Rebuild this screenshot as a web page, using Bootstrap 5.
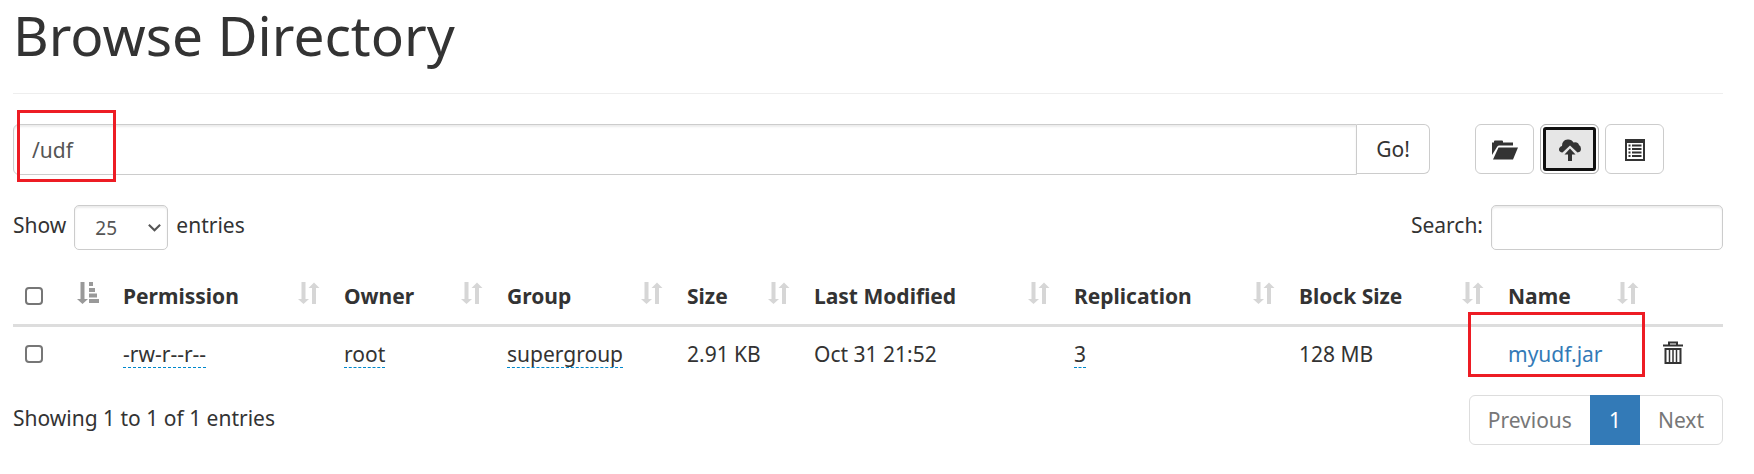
<!DOCTYPE html>
<html lang="en">
<head>
<meta charset="utf-8">
<meta name="viewport" content="width=device-width, initial-scale=1">
<title>Browse Directory</title>
<link href="https://cdn.jsdelivr.net/npm/bootstrap@5.3.0/dist/css/bootstrap.min.css" rel="stylesheet">
<style>
  body { font-family: "Noto Sans", "Open Sans", sans-serif; font-size: 21px; line-height: 30px; color: #333; background: #fff; }
  .page { padding: 4px 31px 29px 13px; }
  h1 { font-size: 55px; line-height: 62px; font-weight: 400; padding-bottom: 27px; border-bottom: 1px solid #eee; margin-bottom: 30px; }
  .form-control, .form-select { border-color: #ccc; color: #555; font-size: 21px; line-height: 30px; box-shadow: inset 0 2px 2px rgba(0,0,0,.075); }
  .path-bar { width: 1417px; flex: 0 1 auto; }
  .path-bar .form-control { height: 51px; padding: 9px 18px; border-radius: 6px 0 0 6px; }
  .tool-btn { height: 50px; border: 1px solid #ccc; border-radius: 6px; background: #fff; color: #333; font-size: 21px; line-height: 30px; padding: 0 18px; }
  .path-bar .tool-btn { width: 75px; border-radius: 0 6px 6px 0; }
  .tools { margin-left: 45px; gap: 6px; }
  .tools .tool-btn { width: 59px; padding: 0 0 2px; }
  .tools .tool-btn.picked { background: #e6e6e6; border-color: #adadad; outline: 3px solid #101010; outline-offset: -6px; box-shadow: inset 0 0 0 2px #fff; }
  .filters { margin-top: 30px; }
  .filters label, .filters span { padding-top: 5px; }
  .filters .form-select { width: 94px; height: 45px; padding: 6px 20px; font-size: 19px; border-radius: 5px;
    background-image: url("data:image/svg+xml,%3csvg xmlns='http://www.w3.org/2000/svg' viewBox='0 0 16 16'%3e%3cpath fill='none' stroke='%23555' stroke-width='2.2' d='M2 5l6 6 6-6'/%3e%3c/svg%3e");
    background-size: 15px; background-position: right 5px center; }
  .filters .form-control { width: 232px; height: 45px; border-radius: 5px; }
  .files { table-layout: fixed; color: #333; margin: 18px 0 14px; --bs-table-color: #333; }
  .files th, .files td { padding: 12px 13px; border: 0; white-space: nowrap; vertical-align: middle; }
  .files thead tr { border-bottom: 3px solid #ddd; }
  .files th { font-weight: 700; padding: 13px 11px 13px 13px; }
  .files th:first-child, .files td:first-child { padding-left: 12px; }
  .files .form-check-input { width: 18px; height: 18px; margin: 0; border: 2px solid #767676; border-radius: 4px; display: block; }
  .sorter { width: 22px; height: 24px; fill: #d6d6d6; margin-bottom: 6px; }
  .sorter.sorted { fill: #999; }
  .editable { color: #333; text-decoration: none; border-bottom: 1px dashed #08c; display: inline-block; line-height: 26px; }
  .file-link { color: #337ab7; text-decoration: none; }
  .plain-btn { border: 0; padding: 0 0 4px; background: none; color: #333; display: block; }
  .marked { position: relative; }
  .marker { position: absolute; border: 3px solid #ed1c24; pointer-events: none; z-index: 6; }
  .marker-path { left: 4px; top: -14px; width: 99px; height: 72px; }
  .marker-file { left: -40px; top: -27px; width: 177px; height: 65px; }
  .pagination { --bs-pagination-font-size: 21px; --bs-pagination-padding-x: 18px; --bs-pagination-padding-y: 9px; --bs-pagination-border-color: #ddd; --bs-pagination-color: #777; --bs-pagination-disabled-color: #777; --bs-pagination-disabled-bg: #fff; --bs-pagination-disabled-border-color: #ddd; --bs-pagination-active-bg: #337ab7; --bs-pagination-active-border-color: #337ab7; --bs-pagination-border-radius: 6px; }
</style>
</head>
<body>
<svg class="d-none" xmlns="http://www.w3.org/2000/svg">
  <symbol id="sort-both" viewBox="0 0 22 24"><path d="M3.500 1h4v17h3.500l-5.500 5-5.500-5h3.500zM14 23V7h-3.500l5.500-5.500 5.500 5.500H18v16z"/></symbol>
  <symbol id="sort-asc" viewBox="0 0 22 24"><path d="M3.500 1h4v17h3.500l-5.500 5-5.500-5h3.500zM12 1h4v4h-4zM12 7h6v4h-6zM12 12.500h8v4h-8zM12 18h10v4h-10z"/></symbol>
</svg>
<main class="page">
  <h1>Browse Directory</h1>
  <div class="d-flex align-items-start">
    <form class="path-bar d-flex align-items-start marked">
      <input class="form-control" type="text" value="/udf" aria-label="Directory path">
      <button class="tool-btn border-start-0" type="button">Go!</button>
      <span class="marker marker-path"></span>
    </form>
    <div class="tools d-flex flex-shrink-0">
      <button class="tool-btn" type="button" aria-label="Create directory"><svg width="26" height="20" viewBox="0 0 26 20" fill="currentColor"><path d="M0 15V2.500h2V1.500Q2 .5 3 .5h7q1 0 1 1v1h10v3H7Q5.500 5.500 5 7zM1 19.500 6.500 7.500H26L21 19.500z"/></svg></button>
      <button class="tool-btn picked" type="button" aria-label="Upload files"><svg width="22" height="22" viewBox="0 0 22 22" fill="currentColor"><path d="M3.500 13.500Q0 13 0 10.500T3 7Q3 1 8.500.5q4-.5 6 3Q19 2.500 20 6q2 1 2 4t-3.500 3.500L11 6.500zM11 9.500l5.500 6H13V22H9v-6.500H5.500z"/></svg></button>
      <button class="tool-btn" type="button" aria-label="Cut &amp; paste"><svg width="20" height="22" viewBox="0 0 20 22" fill="currentColor"><path fill-rule="evenodd" d="M0 0h20v22H0zM2 4v16h16V4z"/><path d="M3.500 5.500h2v2h-2zM7 5.500h9.500v2H7zM3.500 9h2v2h-2zM7 9h9.500v2H7zM3.500 12.500h2v2h-2zM7 12.500h9.500v2H7zM3.500 16h2v2h-2zM7 16h9.500v2H7z"/></svg></button>
    </div>
  </div>

  <div class="filters d-flex justify-content-between">
    <div class="d-flex gap-2">
      <label for="length">Show</label>
      <select id="length" class="form-select"><option>10</option><option selected>25</option><option>50</option></select>
      <span>entries</span>
    </div>
    <div class="d-flex gap-2">
      <label for="search">Search:</label>
      <input id="search" class="form-control" type="search">
    </div>
  </div>

  <table class="table files">
    <colgroup><col width="97"><col width="221"><col width="163"><col width="180"><col width="127"><col width="260"><col width="225"><col width="209"><col width="155"><col width="73"></colgroup>
    <thead>
      <tr>
        <th><div class="d-flex justify-content-between align-items-center"><input class="form-check-input" type="checkbox" aria-label="Select all"><svg class="sorter sorted"><use href="#sort-asc"/></svg></div></th>
        <th><div class="d-flex justify-content-between align-items-center">Permission<svg class="sorter"><use href="#sort-both"/></svg></div></th>
        <th><div class="d-flex justify-content-between align-items-center">Owner<svg class="sorter"><use href="#sort-both"/></svg></div></th>
        <th><div class="d-flex justify-content-between align-items-center">Group<svg class="sorter"><use href="#sort-both"/></svg></div></th>
        <th><div class="d-flex justify-content-between align-items-center">Size<svg class="sorter"><use href="#sort-both"/></svg></div></th>
        <th><div class="d-flex justify-content-between align-items-center">Last Modified<svg class="sorter"><use href="#sort-both"/></svg></div></th>
        <th><div class="d-flex justify-content-between align-items-center">Replication<svg class="sorter"><use href="#sort-both"/></svg></div></th>
        <th><div class="d-flex justify-content-between align-items-center">Block Size<svg class="sorter"><use href="#sort-both"/></svg></div></th>
        <th><div class="d-flex justify-content-between align-items-center">Name<svg class="sorter"><use href="#sort-both"/></svg></div></th>
        <th></th>
      </tr>
    </thead>
    <tbody>
      <tr>
        <td><input class="form-check-input" type="checkbox" aria-label="Select myudf.jar"></td>
        <td><a class="editable" href="#">-rw-r--r--</a></td>
        <td><a class="editable" href="#">root</a></td>
        <td><a class="editable" href="#">supergroup</a></td>
        <td>2.91 KB</td>
        <td>Oct 31 21:52</td>
        <td><a class="editable" href="#">3</a></td>
        <td>128 MB</td>
        <td><div class="marked"><a class="file-link" href="#">myudf.jar</a><span class="marker marker-file"></span></div></td>
        <td><button class="plain-btn" type="button" aria-label="Delete"><svg class="d-block" width="20" height="23" viewBox="0 0 20 23" fill="none" stroke="currentColor"><path stroke-width="2" d="M6 4V1.500h8V4M0 4.500h20M2.500 8v14h15V8z"/><path stroke-width="1.500" d="M6.500 8v14M10 8v14M13.500 8v14"/></svg></button></td>
      </tr>
    </tbody>
  </table>

  <div class="d-flex justify-content-between">
    <div class="pt-2">Showing 1 to 1 of 1 entries</div>
    <ul class="pagination mb-0">
      <li class="page-item disabled"><a class="page-link" href="#">Previous</a></li>
      <li class="page-item active"><a class="page-link" href="#">1</a></li>
      <li class="page-item disabled"><a class="page-link" href="#">Next</a></li>
    </ul>
  </div>
</main>
<script src="https://cdn.jsdelivr.net/npm/bootstrap@5.3.0/dist/js/bootstrap.bundle.min.js"></script>
</body>
</html>
